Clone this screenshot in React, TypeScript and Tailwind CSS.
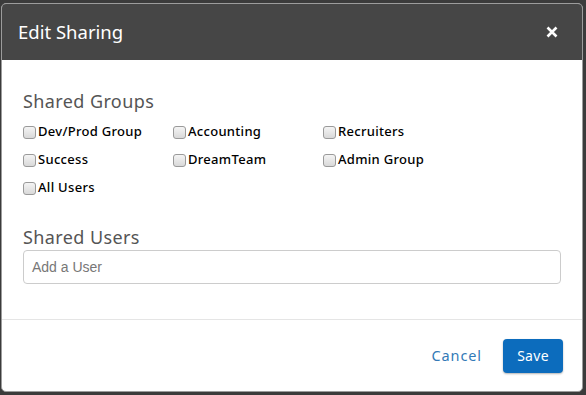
import React from "react";

const groups = [
  "Dev/Prod Group",
  "Accounting",
  "Recruiters",
  "Success",
  "DreamTeam",
  "Admin Group",
  "All Users",
];

function Box() {
  return (
    <span className="inline-block w-[13px] h-[13px] rounded-[3px] border border-[#9a9a9a] bg-gradient-to-b from-[#f4f4f4] to-[#d9d9d9] shrink-0" />
  );
}

export default function App() {
  const font = { fontFamily: '"Noto Sans", "Open Sans", sans-serif' };
  return (
    <div className="w-[586px] h-[395px] bg-[#3b3b3b] pl-[1px] pt-[3px]" style={font}>
      <div className="w-[582px] h-[389px] bg-white rounded-[5px] border border-[#9c9c9c] overflow-hidden flex flex-col">
        <div className="h-[56px] bg-[#464646] flex items-center justify-between pl-[16px] pr-[24px] shrink-0">
          <span className="text-white text-[18.5px] leading-none">Edit Sharing</span>
          <svg width="12" height="12" viewBox="0 0 12 12">
            <path d="M1.5 1.5 L10.5 10.5 M10.5 1.5 L1.5 10.5" stroke="white" strokeWidth="2.6" strokeLinecap="butt" />
          </svg>
        </div>
        <div className="px-[21px] pt-[30px] flex-1">
          <div className="text-[18px] leading-[22px] text-[#555] tracking-[0.4px]">Shared Groups</div>
          <div className="grid grid-cols-[150px_150px_150px] mt-[6px]">
            {groups.map((g) => (
              <label key={g} className="flex items-center gap-[2px] h-[28px]">
                <Box />
                <span className="text-[13px] font-medium text-black tracking-[0.3px]">{g}</span>
              </label>
            ))}
          </div>
          <div className="text-[18px] leading-[22px] text-[#555] tracking-[0.4px] mt-[24px]">Shared Users</div>
          <div className="mt-[2px] h-[34px] border border-[#ccc] rounded-[4px] flex items-center px-[8px]">
            <span className="text-[14px] text-[#777]" style={{ fontFamily: '"Liberation Sans", Arial, sans-serif' }}>
              Add a User
            </span>
          </div>
        </div>
        <div className="h-[72px] border-t border-[#e5e5e5] flex items-center justify-end pr-[19px] gap-[21px] shrink-0">
          <span className="text-[#337ab7] text-[14.5px] tracking-[0.9px]">Cancel</span>
          <div className="w-[60px] h-[34px] bg-[#0c6cbd] rounded-[4px] flex items-center justify-center text-white text-[14px] tracking-[0.3px] shadow-[0_1px_2px_rgba(0,0,0,0.3)]">
            Save
          </div>
        </div>
      </div>
    </div>
  );
}
